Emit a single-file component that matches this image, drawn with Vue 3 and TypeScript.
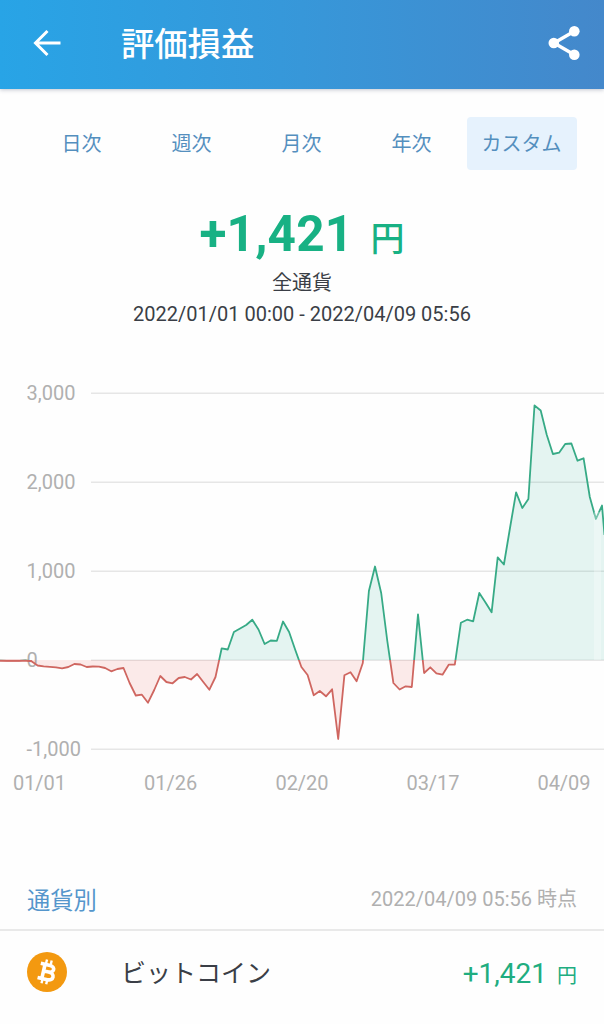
<script setup lang="ts">
interface Tab { label: string; active?: boolean }
interface Tick { label: string; at: number }

const tabs: Tab[] = [
  { label: '日次' },
  { label: '週次' },
  { label: '月次' },
  { label: '年次' },
  { label: 'カスタム', active: true },
]

const yTicks: Tick[] = [
  { label: '3,000', at: 393.3 },
  { label: '2,000', at: 482.3 },
  { label: '1,000', at: 571.3 },
  { label: '0', at: 660.3 },
  { label: '-1,000', at: 749.3 },
]
const xTicks: Tick[] = [
  { label: '01/01', at: 39.5 },
  { label: '01/26', at: 170.7 },
  { label: '02/20', at: 302 },
  { label: '03/17', at: 433 },
  { label: '04/09', at: 564 },
]

const zero = 660
const step = 6.135
// One sample per day, on the chart's vertical scale
const samples: number[] = [
  660.7, 660.8, 660.8, 660.8, 660.3, 661.3, 665.5, 666.3, 666.8, 667.3,
  668.3, 667, 664, 664.5, 667, 666.5, 666.6, 668, 671.3, 669,
  668, 683, 695.5, 694.7, 702.7, 690, 676, 682, 683.3, 678,
  677, 679.5, 674, 682, 689.7, 677, 648.3, 649.5, 632, 628.5,
  625, 619.7, 629.5, 644, 640.5, 640.8, 621.5, 632, 650, 667,
  675, 695.3, 691, 696.3, 689.3, 739, 675.3, 672.3, 681.3, 663,
  591, 566.5, 593, 641, 683, 689.5, 686.3, 687, 614.3, 673,
  667.3, 673.3, 674.7, 664.7, 664.7, 622.7, 619.7, 621.3, 593, 602.5,
  612.3, 557.3, 564.5, 528, 492.3, 508, 499, 405.5, 410.5, 435,
  454, 452.7, 444, 443.5, 460.7, 458.3, 497, 519, 505.5,
]
const points: string[] = samples.map((y, i) => `${(0.8 + i * step).toFixed(1)},${y}`)
const line = `M0,660.7 L${points.join(' L')} L604.5,535`
const area = `${line} V${zero} H0 Z`
</script>

<template>
  <div class="screen">
    <header class="bar">
      <svg class="back" viewBox="0 0 28 28"><path d="M27.5 14H2.5M14.5 2L2.5 14l12 12" /></svg>
      <h1>評価損益</h1>
      <svg class="share" viewBox="0 0 32 36">
        <path d="M26.3 6.2L6 18l20.3 11.8" />
        <circle cx="26.3" cy="6.2" r="5.3" /><circle cx="5.8" cy="18" r="5.3" /><circle cx="26.3" cy="29.8" r="5.3" />
      </svg>
    </header>

    <nav class="tabs">
      <button v-for="t in tabs" :key="t.label" :class="{ active: t.active }">{{ t.label }}</button>
    </nav>

    <section class="summary">
      <p class="total">+1,421<span>円</span></p>
      <p class="scope">全通貨</p>
      <p class="period">2022/01/01 00:00 - 2022/04/09 05:56</p>
    </section>

    <svg class="chart" viewBox="0 360 604 450">
      <defs>
        <clipPath id="above"><rect x="0" y="360" width="604" height="300" /></clipPath>
        <clipPath id="below"><rect x="0" y="660" width="604" height="150" /></clipPath>
      </defs>
      <line v-for="t in yTicks" :key="t.label" class="grid" x1="91" x2="604" :y1="t.at" :y2="t.at" />
      <text v-for="t in yTicks" :key="'y' + t.label" x="26.5" :y="t.at + 6.7">{{ t.label }}</text>
      <text v-for="t in xTicks" :key="'x' + t.label" class="date" :x="t.at" y="790">{{ t.label }}</text>
      <g class="gain" clip-path="url(#above)">
        <path class="fill" :d="area" /><path class="stroke" :d="line" />
      </g>
      <g class="loss" clip-path="url(#below)">
        <path class="fill" :d="area" /><path class="stroke" :d="line" />
      </g>
      <path class="loss-start" d="M0 660.6H26L32 661.2" />
      <rect class="sheen" x="594" y="512" width="7" height="148" />
    </svg>

    <div class="list-head">
      <h2>通貨別</h2>
      <span>2022/04/09 05:56 時点</span>
    </div>

    <div class="row">
      <svg class="coin" viewBox="0 0 40 40">
        <circle cx="20" cy="20" r="20" />
        <g transform="rotate(13 20 20)">
          <path class="b" d="M12 12.9H21.6C27.4 12.9 27.4 19.6 21.6 19.7H17M21.6 19.7C28.8 19.7 28.6 27.4 22 27.4H12M16.4 12.9V27.4" />
          <path class="bars" d="M17.2 7.8V12M22 7.8V12M17.2 28V32.2M22 28V32.2" />
        </g>
      </svg>
      <span class="name">ビットコイン</span>
      <span class="amount">+1,421<small>円</small></span>
    </div>
  </div>
</template>

<style>
body { margin: 0; background: #fff; }
</style>

<style scoped>
.screen {
  width: 604px;
  height: 1024px;
  overflow: hidden;
  background: #fefefe;
  color: #3a3e46;
  font-family: Roboto, "Noto Sans CJK JP", sans-serif;
}
h1, h2, p { margin: 0; font-weight: 400; }
.bar {
  display: flex;
  align-items: center;
  height: 89px;
  box-sizing: border-box;
  padding: 0 24px 4px 33px;
  background: linear-gradient(90deg, #28a4e6, #3797d9 50%, #4488cb);
  box-shadow: 0 1px 4px rgba(60, 70, 100, 0.3);
}
.back { width: 28px; height: 28px; fill: none; stroke: #fff; stroke-width: 3; }
h1 { margin-left: 60px; padding-top: 4px; color: #fff; font-size: 33.3px; font-weight: 500; line-height: 48px; }
.share { width: 32px; height: 36px; margin-left: auto; fill: #fff; }
.share path { fill: none; stroke: #fff; stroke-width: 3.4; }
.tabs { display: grid; grid-template-columns: repeat(5, 110px); margin: 28px 0 0 27px; }
.tabs button {
  height: 53px;
  padding: 2px 1px 0 0;
  border: 0;
  border-radius: 4px;
  background: none;
  color: #548fbe;
  font: 20px/51px Roboto, "Noto Sans CJK JP", sans-serif;
}
.tabs .active { background: #e6f2fd; }
.summary { height: 190px; padding-top: 32px; box-sizing: border-box; text-align: center; }
.total { height: 64px; line-height: 64px; color: #18b184; font-size: 49.5px; font-weight: 700; }
.total span { margin-left: 17px; font-size: 34px; font-weight: 500; }
.total { letter-spacing: 0.2px; }
.scope { margin-top: 2px; font-size: 20px; line-height: 31px; }
.period { font-size: 20px; line-height: 31px; }
.chart { display: block; width: 604px; height: 450px; }
.chart text { fill: #b0b0b0; font-size: 20px; }
.chart .date { text-anchor: middle; }
.grid { stroke: #e6e6e6; stroke-width: 1.4; }
.fill { stroke: none; }
.stroke { fill: none; stroke-width: 1.8; stroke-linejoin: round; }
.gain .fill { fill: rgba(22, 160, 133, 0.11); }
.gain .stroke { stroke: #37aa86; }
.loss .fill { fill: rgba(229, 57, 53, 0.1); }
.loss .stroke { stroke: #cf6660; }
.loss-start { fill: none; stroke: #cf6660; stroke-width: 1.8; }
.sheen { fill: rgba(255, 255, 255, 0.3); }
.list-head {
  display: flex;
  align-items: center;
  justify-content: space-between;
  height: 121px;
  box-sizing: border-box;
  padding: 57px 27px 0;
  border-bottom: 2px solid #e9e9e9;
}
h2 { padding-top: 2px; color: #5596cc; font-size: 23.3px; }
.list-head span { padding-bottom: 2px; color: #b0b0b0; font-size: 20px; }
.row { display: flex; align-items: center; height: 82px; padding: 0 27px; }
.coin { width: 40px; height: 40px; fill: #f39910; }
.coin .b { fill: none; stroke: #fff; stroke-width: 3.6; }
.coin .bars { stroke: #fff; stroke-width: 2.4; }
.name { margin-left: 54px; padding-bottom: 2px; font-size: 25px; }
.amount { margin-left: auto; padding-top: 2px; color: #20ad80; font-size: 28px; }
.amount small { margin-left: 10px; font-size: 20px; }
</style>
